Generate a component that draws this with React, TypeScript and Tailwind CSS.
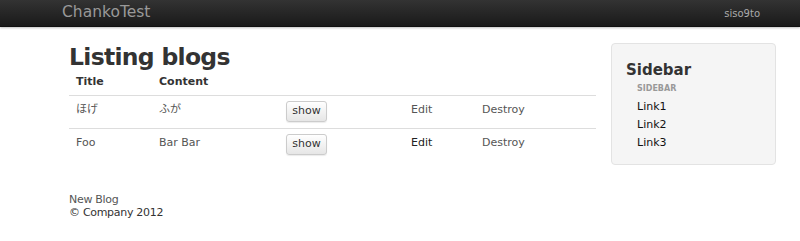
import React from 'react';

const rows = [
    { title: 'ほげ', content: 'ふが', editDark: false },
    { title: 'Foo', content: 'Bar Bar', editDark: true },
];

export default function App() {
    return (
        <div className="min-h-[241px] bg-white text-[11px] text-[#555] font-['DejaVu_Sans','Noto_Sans_CJK_JP',sans-serif]">
            <div className="h-[27px] bg-gradient-to-b from-[#333333] to-[#1a1a1a] border-b border-[#111] shadow-[0_1px_2px_rgba(0,0,0,0.25)] flex items-center justify-between pl-[62px] pr-[40px]">
                <span className="text-[15.5px] text-[#999] leading-none">ChankoTest</span>
                <span className="text-[10px] text-[#aaa]">siso9to</span>
            </div>

            <div className="flex gap-[15px] pl-[69px] pt-[16px]">
                <div className="w-[527px]">
                    <h1 className="text-[23.5px] tracking-[-0.7px] font-bold text-[#333] leading-[28px]">Listing blogs</h1>
                    <table className="w-full border-collapse">
                        <thead>
                            <tr className="text-[#333] font-bold text-left">
                                <th className="w-[83px] px-[7px] pt-[2px] pb-[5px] leading-[17px]">Title</th>
                                <th className="w-[127px] px-[7px] pt-[2px] pb-[5px] leading-[17px]">Content</th>
                                <th className="w-[125px]"></th>
                                <th className="w-[71px]"></th>
                                <th></th>
                            </tr>
                        </thead>
                        <tbody>
                            {rows.map((r) => (
                                <tr key={r.title} className="border-t border-[#ddd] h-[33px] align-top">
                                    <td className="px-[7px] pt-[6px]">{r.title}</td>
                                    <td className="px-[7px] pt-[6px]">{r.content}</td>
                                    <td className="px-[7px] pt-[5px]">
                                        <button className="h-[21px] w-[41px] rounded-[3px] border border-[#ccc] bg-gradient-to-b from-white to-[#e6e6e6] text-[#333] text-[11px] shadow-[0_1px_1px_rgba(0,0,0,0.08)]">
                                            show
                                        </button>
                                    </td>
                                    <td className={`px-[7px] pt-[6px] ${r.editDark ? 'text-[#222]' : ''}`}>Edit</td>
                                    <td className="px-[7px] pt-[6px]">Destroy</td>
                                </tr>
                            ))}
                        </tbody>
                    </table>
                </div>

                <div className="w-[165px] h-[122px] rounded-[4px] border border-[#e3e3e3] bg-[#f5f5f5] pl-[14px] pt-[17px]">
                    <h3 className="text-[15px] font-bold text-[#333] leading-[18px]">Sidebar</h3>
                    <ul className="pl-[11px] mt-[1px]">
                        <li className="text-[8px] font-bold text-[#999] uppercase leading-[18px]">Sidebar</li>
                        <li className="text-[#111] leading-[18px]">Link1</li>
                        <li className="text-[#111] leading-[18px]">Link2</li>
                        <li className="text-[#111] leading-[18px]">Link3</li>
                    </ul>
                </div>
            </div>

            <div className="pl-[69px] pt-[28px] leading-[13px] tracking-[-0.3px]">
                <div className="text-[#555]">New Blog</div>
                <div className="text-[#333]">© Company 2012</div>
            </div>
        </div>
    );
}
